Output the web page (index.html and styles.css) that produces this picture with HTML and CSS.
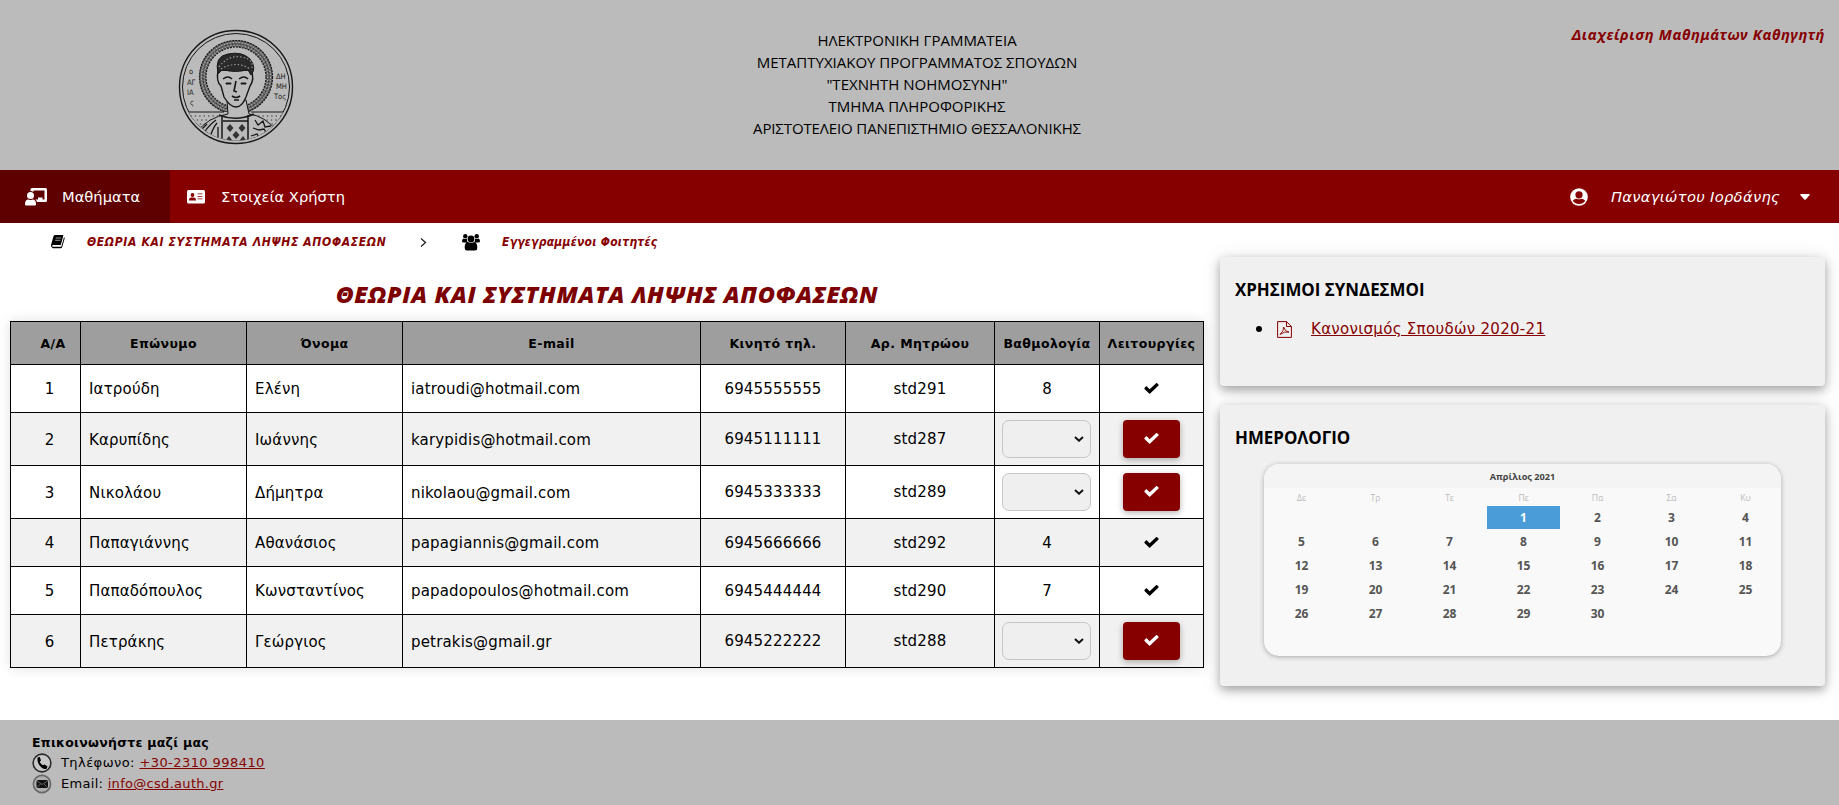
FILE: index.html
```html
<!DOCTYPE html>
<html lang="el">
<head>
<meta charset="utf-8">
<title>Ηλεκτρονική Γραμματεία</title>
<link rel="stylesheet" href="styles.css">
</head>
<body>
<svg class="defs" width="0" height="0">
  <symbol id="check" viewBox="0 0 512 512"><path d="M173.900 429.400l-156.400-156.400c-10-10-10-26.200 0-36.200l46.200-46.200c10-10 26.200-10 36.200 0L192 282.700 412.100 72.600c10-10 26.200-10 36.200 0l46.200 46.200c10 10 10 26.200 0 36.200L210.100 429.400c-10 10-26.200 10-36.200 0z"/></symbol>
</svg>
<header class="top">
  <div class="top-logo">
    <svg width="116" height="116" viewBox="-58 -58 116 116" fill="none" stroke="#161616">
      <defs><clipPath id="seal"><circle r="53.500"/></clipPath></defs>
      <circle r="56.500" stroke-width="1.400"/>
      <circle r="53.500" stroke-width="1"/>
      <g clip-path="url(#seal)">
        <circle cy="-10" r="33.500" stroke="#666" stroke-width="6.500"/>
        <circle cy="-10" r="36.500" stroke-width="1.200" stroke-dasharray="2 1"/>
        <circle cy="-10" r="34.500" stroke="#ccc" stroke-width="1" stroke-dasharray="1.300 1.700"/>
        <circle cy="-10" r="33" stroke="#222" stroke-width="1" stroke-dasharray="1.500 2.100"/>
        <circle cy="-10" r="31.800" stroke="#bbb" stroke-width="1.200" stroke-dasharray="1 2"/>
        <circle cy="-10" r="30" stroke-width="1.200" stroke-dasharray="2 1"/>
        <path fill="#bbb" stroke="none" d="M-54 25H54V58H-54z"/>
        <path d="M-54 25H-12M15 25H54"/>
        <path stroke="#333" stroke-dasharray="1.400 3" d="M-50 29H-18M-48 33H-22M-45 37H-28M-42 41H-32M22 29H50M26 33H48M31 37H45M34 41H42"/>
        <path fill="#bbb" d="M-9 13L-8 27Q-28 30-40 46L-36 58H36L41 44Q29 29 13 27L10 13z"/>
        <path stroke-width="1.500" d="M-14 28V56M12 28V56M-17 28Q0 35 18 27M-13 34H12"/>
        <path stroke-width="1.300" d="M-20 33Q-30 40-35 52M-19 36Q-25 43-27 56M-18 40L-18 56M-29 37L-37 45M19 33L22 38 27 34 29 40 35 39M17 41L23 43 28 42 31 47 38 45M15 49L21 47 24 52 31 51"/>
        <path fill="#333" stroke="none" d="M-6 37l3.500 4-3.500 4-3.500-4zM6 37l3.500 4-3.500 4-3.500-4zM0 44l3.500 4-3.500 4-3.500-4zM-7 49l3 4-3 4-3-4zM7 49l3 4-3 4-3-4z"/>
        <path fill="#bbb" stroke-width="1.400" d="M-18-17Q-20-5-15-1L-12 10Q-6 20 0 20T10 10L14-1Q19-8 15-17z"/>
        <path fill="#2a2a2a" d="M-18-13Q-22-31-8-33Q6-36 14-28Q21-19 15-12L12-17Q0-14-14-17z"/>
        <path stroke="#999" stroke-width="1.200" stroke-dasharray="1.500 2" d="M-17-20Q-8-32 5-30T16-19M-15-18Q0-27 14-18"/>
        <path stroke-width="1.600" d="M-13-8Q-8-12-4-8M3-8Q8-12 12-8M-4 9Q0 12 4 9M0-6L-2 4 1 5M-2 13H3"/>
        <path fill="#222" d="M-10-4h5v1h-5zM5-4h5v1H5z"/>
      </g>
      <g class="seal-text">
        <text x="-47" y="-13">ο</text><text x="-49" y="-2">ΑΓ</text><text x="-49" y="8">ΙΑ</text><text x="-46" y="18">ς</text>
        <text x="40" y="-8">ΔΗ</text><text x="40" y="2">ΜΗ</text><text x="38" y="12">Τος</text>
      </g>
    </svg>
  </div>
  <div class="top-title">
    <div class="t1">ΗΛΕΚΤΡΟΝΙΚΗ ΓΡΑΜΜΑΤΕΙΑ</div>
    <div class="t2">ΜΕΤΑΠΤΥΧΙΑΚΟΥ ΠΡΟΓΡΑΜΜΑΤΟΣ ΣΠΟΥΔΩΝ</div>
    <div class="t3">"ΤΕΧΝΗΤΗ ΝΟΗΜΟΣΥΝΗ"</div>
    <div class="t4">ΤΜΗΜΑ ΠΛΗΡΟΦΟΡΙΚΗΣ</div>
    <div class="t5">ΑΡΙΣΤΟΤΕΛΕΙΟ ΠΑΝΕΠΙΣΤΗΜΙΟ ΘΕΣΣΑΛΟΝΙΚΗΣ</div>
  </div>
  <div class="top-role"><span>Διαχείριση Μαθημάτων Καθηγητή</span></div>
</header>

<nav class="nav">
  <a class="nav-item active">
    <svg width="22" height="18" viewBox="0 0 22 18" fill="#fff"><path d="M7 0H20.500Q22 0 22 1.500V12.500Q22 14 20.500 14H12Q11.700 12.500 10.500 11.500H13V9.500H17.500V11.500H19.500V2.500H8.500V4Q7.500 3 5.500 3V1.500Q5.500 0 7 0z"/><circle cx="5.500" cy="7.500" r="3.500"/><path d="M3.500 11.500Q5.500 12.500 7.500 11.500Q11 11.500 11 16V16.500Q11 17.500 10 17.500H1Q0 17.500 0 16.500Q0 11.500 3.500 11.500z"/></svg>
    <span>Μαθήματα</span>
  </a>
  <a class="nav-item second">
    <svg width="18" height="14" viewBox="0 0 18 14"><rect width="18" height="13.500" rx="1.500" fill="#fff"/><g fill="#870000"><circle cx="5.500" cy="5" r="1.900"/><path d="M2 10.500Q2 7.500 4.300 7.500H6.700Q9 7.500 9 10.500z"/><path d="M10.500 3.500h5v.8h-5zM10.500 6h5v.8h-5zM10.500 8.500h5v.8h-5z"/></g></svg>
    <span>Στοιχεία Χρήστη</span>
  </a>
  <a class="nav-user">
    <svg width="18" height="18" viewBox="0 0 18 18"><circle cx="9" cy="9" r="8.800" fill="#fff"/><circle cx="9" cy="6.800" r="3.600" fill="#870000"/><path d="M2.800 12.700Q4.500 10.700 6.500 10.700Q9 12 11.500 10.700Q13.500 10.700 15.200 12.700Q13 16 9 16T2.800 12.700z" fill="#870000"/></svg>
    <span>Παναγιώτου Ιορδάνης</span>
    <svg class="caret" width="10" height="6" viewBox="0 0 10 6"><path d="M1 0H9Q10.200 .4 9.500 1.300L5.700 5.500Q5 6.200 4.300 5.500L.5 1.300Q-.2 .4 1 0z" fill="#fff"/></svg>
  </a>
</nav>

<div class="page">
  <main class="main">
    <div class="crumbs">
      <svg width="14" height="14" viewBox="0 0 14 14"><path fill="#000" d="M4 0H11.500Q12.500 0 12.200 1L9.800 10H1.700Q.9 10.800 1.500 11.800H10.300L13 2.300Q14 2.700 13.600 3.700L11.200 12Q10.800 13.200 9.500 13.200H2Q-.3 12.500 0 10L2.500 1.200Q2.900 0 4 0z"/><path stroke="#aaa" stroke-width=".9" d="M4.800 3H10M4.200 5.300H9.400"/></svg>
      <span class="crumb-a">ΘΕΩΡΙΑ ΚΑΙ ΣΥΣΤΗΜΑΤΑ ΛΗΨΗΣ ΑΠΟΦΑΣΕΩΝ</span>
      <svg class="chev" width="7" height="9" viewBox="0 0 7 9" fill="none" stroke="#222" stroke-width="1.300"><path d="M1 .5L5.500 4.500 1 8.500"/></svg>
      <svg class="group" width="18" height="17" viewBox="0 0 18 17"><circle cx="3.300" cy="2.300" r="2.200"/><circle cx="14.700" cy="2.300" r="2.200"/><circle cx="9" cy="5" r="3.400"/><path d="M1.500 4.500Q3.500 5.500 5 4.500Q4.500 7 6 8.500H1.500Q0 8.500 0 7Q0 5 1.500 4.500zM16.500 4.500Q14.500 5.500 13 4.500Q13.500 7 12 8.500H16.500Q18 8.500 18 7Q18 5 16.500 4.500zM6 8Q9 10 12 8Q15.500 8.500 15.300 14Q15.300 16.500 13 16.500H5Q2.700 16.500 2.700 14Q2.500 8.500 6 8z"/></svg>
      <span class="crumb-b">Εγγεγραμμένοι Φοιτητές</span>
    </div>
    <h1 class="title"><span>ΘΕΩΡΙΑ ΚΑΙ ΣΥΣΤΗΜΑΤΑ ΛΗΨΗΣ ΑΠΟΦΑΣΕΩΝ</span></h1>
    <table class="students">
      <colgroup><col class="c1"><col class="c2"><col class="c3"><col class="c4"><col class="c5"><col class="c6"><col class="c7"><col class="c8"></colgroup>
      <thead><tr><th class="num">Α/Α</th><th>Επώνυμο</th><th>Όνομα</th><th>E-mail</th><th>Κινητό τηλ.</th><th>Αρ. Μητρώου</th><th>Βαθμολογία</th><th>Λειτουργίες</th></tr></thead>
      <tbody>
        <tr><td class="num">1</td><td>Ιατρούδη</td><td>Ελένη</td><td>iatroudi@hotmail.com</td><td class="mid">6945555555</td><td class="mid">std291</td><td class="mid">8</td><td class="mid"><svg class="tick" width="15" height="15"><use href="#check"/></svg></td></tr>
        <tr class="edit"><td class="num">2</td><td>Καρυπίδης</td><td>Ιωάννης</td><td>karypidis@hotmail.com</td><td class="mid">6945111111</td><td class="mid">std287</td><td class="mid"><div class="select"><svg width="10" height="6" viewBox="0 0 10 6"><path d="M1 1L5 4.700 9 1"/></svg></div></td><td class="mid"><div class="btn"><svg width="15" height="15"><use href="#check"/></svg></div></td></tr>
        <tr class="edit"><td class="num">3</td><td>Νικολάου</td><td>Δήμητρα</td><td>nikolaou@gmail.com</td><td class="mid">6945333333</td><td class="mid">std289</td><td class="mid"><div class="select"><svg width="10" height="6" viewBox="0 0 10 6"><path d="M1 1L5 4.700 9 1"/></svg></div></td><td class="mid"><div class="btn"><svg width="15" height="15"><use href="#check"/></svg></div></td></tr>
        <tr><td class="num">4</td><td>Παπαγιάννης</td><td>Αθανάσιος</td><td>papagiannis@gmail.com</td><td class="mid">6945666666</td><td class="mid">std292</td><td class="mid">4</td><td class="mid"><svg class="tick" width="15" height="15"><use href="#check"/></svg></td></tr>
        <tr><td class="num">5</td><td>Παπαδόπουλος</td><td>Κωνσταντίνος</td><td>papadopoulos@hotmail.com</td><td class="mid">6945444444</td><td class="mid">std290</td><td class="mid">7</td><td class="mid"><svg class="tick" width="15" height="15"><use href="#check"/></svg></td></tr>
        <tr class="edit"><td class="num">6</td><td>Πετράκης</td><td>Γεώργιος</td><td>petrakis@gmail.gr</td><td class="mid">6945222222</td><td class="mid">std288</td><td class="mid"><div class="select"><svg width="10" height="6" viewBox="0 0 10 6"><path d="M1 1L5 4.700 9 1"/></svg></div></td><td class="mid"><div class="btn"><svg width="15" height="15"><use href="#check"/></svg></div></td></tr>
      </tbody>
    </table>
  </main>
  <aside class="side">
    <section class="card links">
      <h2>ΧΡΗΣΙΜΟΙ ΣΥΝΔΕΣΜΟΙ</h2>
      <div class="link-row">
        <i class="bullet"></i>
        <svg width="15" height="17" viewBox="0 0 15 17" fill="none" stroke="#870000"><path d="M.6.600H9.500L14.400 5.500V16.400H.6zM9.500.6V5.500H14.400"/><path stroke-width=".9" d="M3 13.500Q7 10 6.700 6Q7.800 10.500 12 11.200Q8 9.800 3 13.500z"/></svg>
        <a>Κανονισμός Σπουδών 2020-21</a>
      </div>
    </section>
    <section class="card agenda">
      <h2>ΗΜΕΡΟΛΟΓΙΟ</h2>
      <div class="cal">
        <div class="cal-head">Απρίλιος 2021</div>
        <div class="cal-grid names"><span>Δε</span><span>Τρ</span><span>Τε</span><span>Πε</span><span>Πα</span><span>Σα</span><span>Κυ</span></div>
        <div class="cal-grid days"><span></span><span></span><span></span><span class="today">1</span><span>2</span><span>3</span><span>4</span><span>5</span><span>6</span><span>7</span><span>8</span><span>9</span><span>10</span><span>11</span><span>12</span><span>13</span><span>14</span><span>15</span><span>16</span><span>17</span><span>18</span><span>19</span><span>20</span><span>21</span><span>22</span><span>23</span><span>24</span><span>25</span><span>26</span><span>27</span><span>28</span><span>29</span><span>30</span></div>
      </div>
    </section>
  </aside>
</div>

<footer class="foot">
  <div class="foot-title"><span>Επικοινωνήστε μαζί μας</span></div>
  <div class="foot-row"><svg width="20" height="20" viewBox="0 0 20 20"><circle cx="10" cy="10" r="8.900" fill="#c8c8c8" stroke="#2a2a2a" stroke-width="1.600"/><path d="M5.500 4.500L7.800 4 9 7.500 7.800 8.800Q8.800 11.200 11 12.300L12.500 11.500 15.500 13.500 14.500 15.800Q12.500 16.800 9.500 14.500Q4.800 10.500 5.500 4.500z"/></svg><span class="tel">Τηλέφωνο: <a>+30-2310 998410</a></span></div>
  <div class="foot-row"><svg width="20" height="20" viewBox="0 0 20 20"><circle cx="10" cy="10" r="8.600" fill="#b0b0b0" stroke="#666" stroke-width="1.600"/><rect x="4.500" y="6" width="11.500" height="8" rx="1.500" fill="#111"/><path d="M5 7L10.200 10.500 15.500 7M5 13.500L8.500 10M15.500 13.500L12 10" fill="none" stroke="#777" stroke-width=".8"/></svg><span class="mail">Email: <a>info@csd.auth.gr</a></span></div>
</footer>
</body>
</html>
```
FILE: styles.css
```css
* { box-sizing: border-box; }
body { margin: 0; height: 805px; overflow: hidden; display: flex; flex-direction: column; background: #fff; color: #000; font-family: "DejaVu Sans", Verdana, sans-serif; font-size: 15px; white-space: nowrap; }
svg { flex: none; display: block; }
.defs { position: absolute; }
.top { height: 170px; flex: none; background: #bbb; display: grid; grid-template-columns: 473px 888px 1fr; }
.top-logo { padding: 29px 0 0 178px; }
.seal-text { fill: #222; stroke: none; font: 7.500px "DejaVu Sans Condensed", "DejaVu Sans", sans-serif; }
.top-title { padding-top: 29px; text-align: center; font: 15px/22px "Open Sans", sans-serif; }
.top-title div { height: 22px; }
.t5 { letter-spacing: -.12px; }
.top-role { padding: 24px 14px 0 0; text-align: right; color: #870000; font: italic bold 14.800px/20px "Noto Sans", sans-serif; letter-spacing: .6px; }
.nav { height: 53px; flex: none; background: #870000; color: #fff; display: flex; font-size: 14.700px; }
.nav-item { display: flex; align-items: center; }
.nav-item.active { width: 170px; padding-left: 25px; gap: 15px; background: #5f0000; }
.nav-item.second { padding-left: 17px; gap: 16px; }
.nav-user { margin-left: auto; padding-right: 29px; display: flex; align-items: center; font-style: italic; letter-spacing: .32px; }
.nav-user span { margin: 0 20px 0 23px; }
.page { flex: 1; display: flex; }
.main { width: 1204px; padding-left: 10px; }
.crumbs { height: 38px; padding-left: 41px; display: flex; align-items: center; color: #870000; font: italic bold 12px "DejaVu Sans Condensed", "DejaVu Sans", sans-serif; }
.crumb-a { width: 299px; margin-left: 22px; letter-spacing: .66px; }
.chev { margin-left: 34px; }
.group { margin-left: 35px; }
.crumb-b { margin-left: 22px; letter-spacing: .25px; }
.title { height: 60px; margin: 0; padding-top: 17px; text-align: center; color: #7c0000; font: italic 800 23.500px/32px "Open Sans", sans-serif; letter-spacing: .66px; }
.students { width: 1194px; table-layout: fixed; border-collapse: collapse; box-shadow: 0 0 12px rgba(0,0,0,.12); }
.c1 { width: 70px; } .c2 { width: 166px; } .c3 { width: 156px; } .c4 { width: 298px; } .c5 { width: 145px; } .c6 { width: 149px; } .c7 { width: 105px; } .c8 { width: 104px; }
.students th, .students td { border: 1px solid #000; padding: 0 7px 0 8px; text-align: left; letter-spacing: .17px; }
.students th { height: 43px; padding: 0; background: #9e9e9e; font-size: 12.500px; text-align: center; letter-spacing: .42px; }
.students td { height: 48px; }
.students .edit td { height: 53px; padding-top: 1px; }
.students tbody tr { background: #fff; }
.students tbody tr:nth-child(even) { background: #f1f1f1; }
.students .num { text-align: center; padding-left: 15px; }
.students td.mid { text-align: center; padding: 0 7px; }
.tick { margin: 0 auto; }
.select { width: 89px; height: 38px; border: 1px solid #c6c6c6; border-radius: 7px; background: #efefef; display: flex; align-items: center; justify-content: flex-end; padding-right: 6px; }
.select svg { fill: none; stroke: #111; stroke-width: 2; }
.btn { width: 57px; height: 38px; margin: 0 auto; border-radius: 4px; background: #870000; display: flex; align-items: center; justify-content: center; padding-bottom: 2px; box-shadow: 0 2px 6px rgba(0,0,0,.3); }
.btn svg { fill: #fff; }
.side { width: 621px; padding: 34px 0 0 16px; }
.card { width: 605px; background: #f0f0f0; border-radius: 4px; padding: 21px 15px 0; box-shadow: 0 4px 10px rgba(0,0,0,.3), 0 2px 20px rgba(0,0,0,.12); }
.links { height: 129px; margin-bottom: 19px; }
.agenda { height: 281px; }
.card h2 { margin: 0; font: bold 16.900px/24px "Open Sans", sans-serif; }
.link-row { display: flex; align-items: center; padding: 15px 0 0 21px; color: #870000; line-height: 24px; }
.bullet { width: 6px; height: 6px; border-radius: 50%; background: #000; margin-right: 15px; }
.link-row a { margin-left: 19px; text-decoration: underline; letter-spacing: .3px; }
.cal { width: 517px; height: 192px; margin: 14px 0 0 29px; border-radius: 15px; overflow: hidden; background: #f9f9f9; box-shadow: 0 1px 5px rgba(0,0,0,.3); font-family: "Open Sans", sans-serif; font-weight: bold; color: #555; text-align: center; }
.cal-head { height: 24px; line-height: 26px; font-size: 9.200px; background: #f4f4f4; color: #444; }
.cal-grid { display: grid; grid-template-columns: repeat(7, 73px); column-gap: 1px; padding-left: 1px; }
.names { height: 18px; font-size: 8.500px; line-height: 19px; color: #bbb; font-weight: normal; }
.days { grid-auto-rows: 23px; row-gap: 1px; font-size: 12px; line-height: 24px; }
.today { background: #4a9cd8; color: #fff; }
.foot { height: 85px; flex: none; background: #bbb; padding: 12px 0 0 32px; font-size: 13px; }
.foot-title { height: 20px; line-height: 21px; font-weight: bold; font-size: 12.500px; letter-spacing: .27px; }
.foot-row { height: 21px; display: flex; align-items: center; gap: 9px; }
.tel { letter-spacing: .43px; }
.mail { letter-spacing: .3px; }
.foot a { color: #870000; text-decoration: underline; }
```
